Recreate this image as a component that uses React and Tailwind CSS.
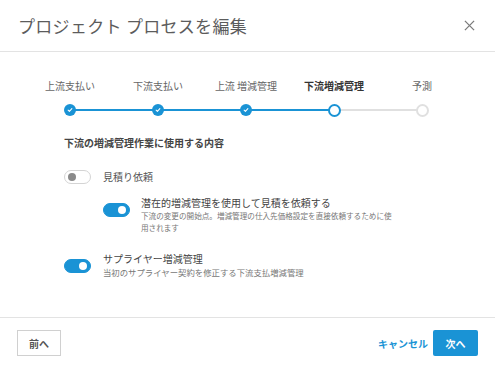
import React, { useState } from "react";

const steps = [
  { label: "上流支払い", state: "done" },
  { label: "下流支払い", state: "done" },
  { label: "上流 増減管理", state: "done" },
  { label: "下流増減管理", state: "current" },
  { label: "予測", state: "todo" },
];

function Check() {
  return (
    <svg width="6" height="6" viewBox="0 0 8 8" fill="none">
      <path d="M1.5 4.2 L3.2 5.8 L6.5 2.2" stroke="white" strokeWidth="1.4" strokeLinecap="round" strokeLinejoin="round" />
    </svg>
  );
}

function Toggle({ on, onClick }) {
  return (
    <button
      onClick={onClick}
      className={
        "relative w-[27px] h-[14px] rounded-full shrink-0 border " +
        (on ? "bg-[#1a93d5] border-[#1a93d5]" : "bg-white border-[#d4d4d4]")
      }
    >
      <span
        className={
          "absolute top-1/2 -translate-y-1/2 w-[8px] h-[8px] rounded-full " +
          (on ? "right-[3px] bg-white" : "left-[3px] bg-[#8a8a8a]")
        }
      />
    </button>
  );
}

export default function App() {
  const [quote, setQuote] = useState(false);
  const [potential, setPotential] = useState(true);
  const [supplier, setSupplier] = useState(true);

  return (
    <div
      className="w-[495px] h-[368px] bg-white flex flex-col text-[#333]"
      style={{ fontFamily: '"Noto Sans CJK JP", "Noto Sans", sans-serif' }}
    >
      {/* header */}
      <div className="h-[52px] shrink-0 flex items-center justify-between pl-[18px] pr-[20px] border-b border-[#e3e3e3]">
        <h1 className="text-[17px] text-[#5c5c5c] tracking-[0.3px]">プロジェクト プロセスを編集</h1>
        <button className="text-[#888]">
          <svg width="11" height="11" viewBox="0 0 12 12">
            <path d="M1 1 L11 11 M11 1 L1 11" stroke="#7a7a7a" strokeWidth="1.4" />
          </svg>
        </button>
      </div>

      {/* body */}
      <div className="flex-1">
        {/* stepper */}
        <div className="grid grid-cols-[repeat(5,88px)] pl-[26px] pt-[27px]">
          {steps.map((s, i) => (
            <div key={i} className="flex flex-col items-center">
              <div
                className={
                  "text-[10px] leading-[14px] whitespace-nowrap " +
                  (s.state === "current" ? "font-bold text-[#333]" : "text-[#666]")
                }
              >
                {s.label}
              </div>
              <div className="relative w-full h-[14px] mt-[10px] flex items-center justify-center">
                {i > 0 && (
                  <div
                    className={
                      "absolute left-0 right-1/2 top-1/2 -translate-y-1/2 h-[2px] " +
                      (s.state === "todo" ? "bg-[#e0e0e0]" : "bg-[#1a93d5]")
                    }
                  />
                )}
                {i < steps.length - 1 && (
                  <div
                    className={
                      "absolute left-1/2 right-0 top-1/2 -translate-y-1/2 h-[2px] " +
                      (s.state === "done" ? "bg-[#1a93d5]" : "bg-[#e0e0e0]")
                    }
                  />
                )}
                {s.state === "done" && (
                  <div className="relative w-[12px] h-[12px] rounded-full bg-[#1a93d5] flex items-center justify-center">
                    <Check />
                  </div>
                )}
                {s.state === "current" && (
                  <div className="relative w-[13px] h-[13px] rounded-full bg-white border-2 border-[#1a93d5]" />
                )}
                {s.state === "todo" && (
                  <div className="relative w-[13px] h-[13px] rounded-full bg-white border-2 border-[#e0e0e0]" />
                )}
              </div>
            </div>
          ))}
        </div>

        {/* options */}
        <div className="pl-[64px] pt-[19px]">
          <h2 className="text-[10px] font-bold text-[#444] leading-[14px]">下流の増減管理作業に使用する内容</h2>

          <div className="flex items-center gap-[12px] mt-[19px]">
            <Toggle on={quote} onClick={() => setQuote(!quote)} />
            <span className="text-[10px] text-[#555]">見積り依頼</span>
          </div>

          <div className="flex items-start gap-[11px] mt-[11px] pl-[39px]">
            <div className="pt-[2px]">
              <Toggle on={potential} onClick={() => setPotential(!potential)} />
            </div>
            <div>
              <div className="text-[10px] leading-[15px] text-[#444]">潜在的増減管理を使用して見積を依頼する</div>
              <div className="text-[7.6px] leading-[12px] text-[#777] w-[255px]">
                下流の変更の開始点。増減管理の仕入先価格設定を直接依頼するために使用されます
              </div>
            </div>
          </div>

          <div className="flex items-start gap-[12px] mt-[17px]">
            <div className="pt-[2px]">
              <Toggle on={supplier} onClick={() => setSupplier(!supplier)} />
            </div>
            <div>
              <div className="text-[10px] leading-[15px] text-[#444]">サプライヤー増減管理</div>
              <div className="text-[8.4px] leading-[12px] text-[#777]">当初のサプライヤー契約を修正する下流支払増減管理</div>
            </div>
          </div>
        </div>
      </div>

      {/* footer */}
      <div className="h-[51px] shrink-0 border-t border-[#e3e3e3] flex items-center justify-between pl-[17px] pr-[17px]">
        <button className="w-[44px] h-[26px] border border-[#d0d0d0] text-[10px] font-bold text-[#555] bg-white">
          前へ
        </button>
        <div className="flex items-center gap-[5px]">
          <button className="text-[10px] font-bold text-[#1a93d5]">キャンセル</button>
          <button className="w-[45px] h-[26px] bg-[#1a93d5] text-white text-[10px] font-bold rounded-[2px]">次へ</button>
        </div>
      </div>
    </div>
  );
}
